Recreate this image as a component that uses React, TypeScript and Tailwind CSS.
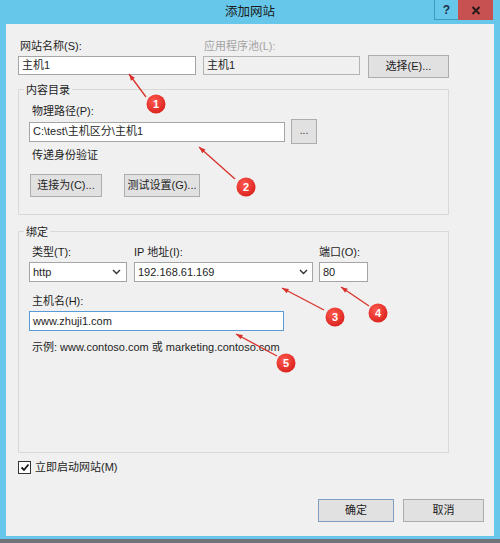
import React from "react";

const font = "font-['Liberation_Sans','Noto_Sans_CJK_SC',sans-serif]";

function Btn({ children, w, primary }: { children: React.ReactNode; w: string; primary?: boolean }) {
  return (
    <div
      className={`${w} h-[23px] flex items-center justify-center bg-[#e1e1e1] border ${
        primary ? "border-[#7f9dbd]" : "border-[#adadad]"
      } text-[11px] text-[#1e1e1e]`}
    >
      {children}
    </div>
  );
}

function Chevron() {
  return (
    <svg width="9" height="6" viewBox="0 0 9 6" className="shrink-0">
      <polyline points="1,1 4.5,4.5 8,1" fill="none" stroke="#333" strokeWidth="1.4" />
    </svg>
  );
}

function Bubble({ cx, cy, n }: { cx: number; cy: number; n: number }) {
  return (
    <g>
      <circle cx={cx} cy={cy} r={9.5} fill="url(#bub)" />
      <text
        x={cx}
        y={cy + 4}
        textAnchor="middle"
        fontSize="11"
        fontWeight="700"
        fill="#fff"
        fontFamily="Liberation Sans, sans-serif"
      >
        {n}
      </text>
    </g>
  );
}

function Arrow({ x1, y1, x2, y2 }: { x1: number; y1: number; x2: number; y2: number }) {
  const ang = Math.atan2(y2 - y1, x2 - x1);
  const len = 7;
  const spread = 0.35;
  const ax = x1 + len * Math.cos(ang + spread);
  const ay = y1 + len * Math.sin(ang + spread);
  const bx = x1 + len * Math.cos(ang - spread);
  const by = y1 + len * Math.sin(ang - spread);
  return (
    <g>
      <line x1={x1} y1={y1} x2={x2} y2={y2} stroke="#d8322b" strokeWidth="1.3" />
      <polygon points={`${x1},${y1} ${ax},${ay} ${bx},${by}`} fill="#d8322b" />
    </g>
  );
}

export default function App() {
  return (
    <div className={`relative w-[500px] h-[543px] bg-[#66c7ea] flex flex-col ${font} text-[#1e1e1e]`}>
      {/* title bar */}
      <div className="h-[24px] grid grid-cols-[1fr_auto_1fr] items-start">
        <div />
        <div className="h-[24px] flex items-center text-[12.5px] text-[#1a1a1a]">添加网站</div>
        <div className="flex justify-end pr-[7px]">
          <div className="w-[24px] h-[20px] border-l border-b border-[#3d9cc4] flex items-center justify-center text-[12px] font-bold text-[#1c2d4a]">
            ?
          </div>
          <div className="w-[35px] h-[20px] bg-[#c75050] flex items-center justify-center">
            <svg width="10" height="9" viewBox="0 0 10 9">
              <path d="M1.5 1 L8.5 8 M8.5 1 L1.5 8" stroke="#2a1a1a" strokeWidth="2" />
            </svg>
          </div>
        </div>
      </div>

      {/* client area */}
      <div className="mx-[6px] h-[512px] bg-[#f0f0f0] pl-[12px] pt-[14px] flex flex-col text-[11px]">
        {/* row 1 */}
        <div className="flex items-start">
          <div className="w-[178px] flex flex-col">
            <div className="h-[16px] leading-[16px] pl-[2px]">网站名称(S):</div>
            <div className="mt-[2px] h-[19px] bg-white border border-[#a5a5a5] flex items-center pl-[3px]">主机1</div>
          </div>
          <div className="ml-[7px] w-[157px] flex flex-col">
            <div className="h-[16px] leading-[16px] pl-[1px] text-[#a3a3a3]">应用程序池(L):</div>
            <div className="mt-[2px] h-[19px] bg-[#f0f0f0] border border-[#b4b4b4] flex items-center pl-[3px]">主机1</div>
          </div>
          <div className="ml-[8px] mt-[17px]">
            <Btn w="w-[81px]">选择(E)...</Btn>
          </div>
        </div>

        {/* group 1 */}
        <div className="relative mt-[11px] w-[431px] h-[126px] border border-[#d9d9d9] pl-[10px] pt-[13px] flex flex-col">
          <span className="absolute left-[5px] -top-[7px] px-[2px] bg-[#f0f0f0] leading-[14px]">内容目录</span>
          <div className="h-[16px] leading-[16px] pl-[3px]">物理路径(P):</div>
          <div className="h-[25px] flex items-center">
            <div className="w-[256px] h-[20px] bg-white border border-[#a5a5a5] flex items-center pl-[3px]">
              C:\test\主机区分\主机1
            </div>
            <div className="ml-[6px] w-[26px] h-[25px] bg-[#e1e1e1] border border-[#adadad] flex items-center justify-center text-[10px] leading-none pb-[2px]">
              ...
            </div>
          </div>
          <div className="mt-[3px] h-[16px] leading-[16px] pl-[3px]">传递身份验证</div>
          <div className="mt-[11px] flex pl-[1px]">
            <Btn w="w-[72px]">连接为(C)...</Btn>
            <div className="ml-[22px]">
              <Btn w="w-[76px]">测试设置(G)...</Btn>
            </div>
          </div>
        </div>

        {/* group 2 */}
        <div className="relative mt-[16px] w-[431px] h-[222px] border border-[#d9d9d9] pl-[10px] pt-[12px] flex flex-col">
          <span className="absolute left-[5px] -top-[7px] px-[2px] bg-[#f0f0f0] leading-[14px]">绑定</span>
          <div className="flex">
            <div className="w-[98px] flex flex-col">
              <div className="h-[16px] leading-[16px] pl-[3px]">类型(T):</div>
              <div className="mt-[2px] h-[20px] bg-white border border-[#a5a5a5] flex items-center justify-between pl-[3px] pr-[5px]">
                <span>http</span>
                <Chevron />
              </div>
            </div>
            <div className="ml-[7px] w-[179px] flex flex-col">
              <div className="h-[16px] leading-[16px]">IP 地址(I):</div>
              <div className="mt-[2px] h-[20px] bg-white border border-[#a5a5a5] flex items-center justify-between pl-[3px] pr-[4px]">
                <span>192.168.61.169</span>
                <Chevron />
              </div>
            </div>
            <div className="ml-[6px] w-[49px] flex flex-col">
              <div className="h-[16px] leading-[16px]">端口(O):</div>
              <div className="mt-[2px] h-[20px] bg-white border border-[#a5a5a5] flex items-center pl-[3px]">80</div>
            </div>
          </div>
          <div className="mt-[11px] h-[16px] leading-[16px] pl-[3px]">主机名(H):</div>
          <div className="mt-[2px] w-[255px] h-[20px] bg-white border border-[#5a9ad8] flex items-center pl-[3px]">
            www.zhuji1.com
          </div>
          <div className="mt-[8px] h-[16px] leading-[16px] pl-[3px]">示例: www.contoso.com 或 marketing.contoso.com</div>
        </div>

        {/* checkbox */}
        <div className="mt-[6px] h-[16px] flex items-center">
          <div className="w-[13px] h-[13px] bg-white border border-[#333] flex items-center justify-center">
            <svg width="10" height="9" viewBox="0 0 10 9">
              <polyline points="1.5,4.5 4,7 8.5,1.5" fill="none" stroke="#1a1a1a" strokeWidth="1.8" />
            </svg>
          </div>
          <span className="ml-[4px]">立即启动网站(M)</span>
        </div>

        {/* buttons */}
        <div className="mt-auto pb-[14px] pr-[10px] flex justify-end">
          <Btn w="w-[76px]" primary>
            确定
          </Btn>
          <div className="ml-[9px]">
            <Btn w="w-[81px]">取消</Btn>
          </div>
        </div>
      </div>

      <div className="mt-[3px] h-[4px] bg-[#6f7377]" />

      {/* annotations */}
      <svg className="absolute inset-0 pointer-events-none" width="500" height="543" viewBox="0 0 500 543">
        <defs>
          <radialGradient id="bub" cx="40%" cy="35%" r="70%">
            <stop offset="0%" stopColor="#ff5a4f" />
            <stop offset="100%" stopColor="#d9201c" />
          </radialGradient>
        </defs>
        <Arrow x1={129} y1={74} x2={146} y2={97} />
        <Bubble cx={156} cy={104} n={1} />
        <Arrow x1={199} y1={147} x2={235} y2={179} />
        <Bubble cx={246} cy={187} n={2} />
        <Arrow x1={282} y1={288} x2={324} y2={310} />
        <Bubble cx={335} cy={317} n={3} />
        <Arrow x1={341} y1={287} x2={369} y2={306} />
        <Bubble cx={378} cy={313} n={4} />
        <Arrow x1={236} y1={334} x2={277} y2={356} />
        <Bubble cx={286} cy={363} n={5} />
      </svg>
    </div>
  );
}
